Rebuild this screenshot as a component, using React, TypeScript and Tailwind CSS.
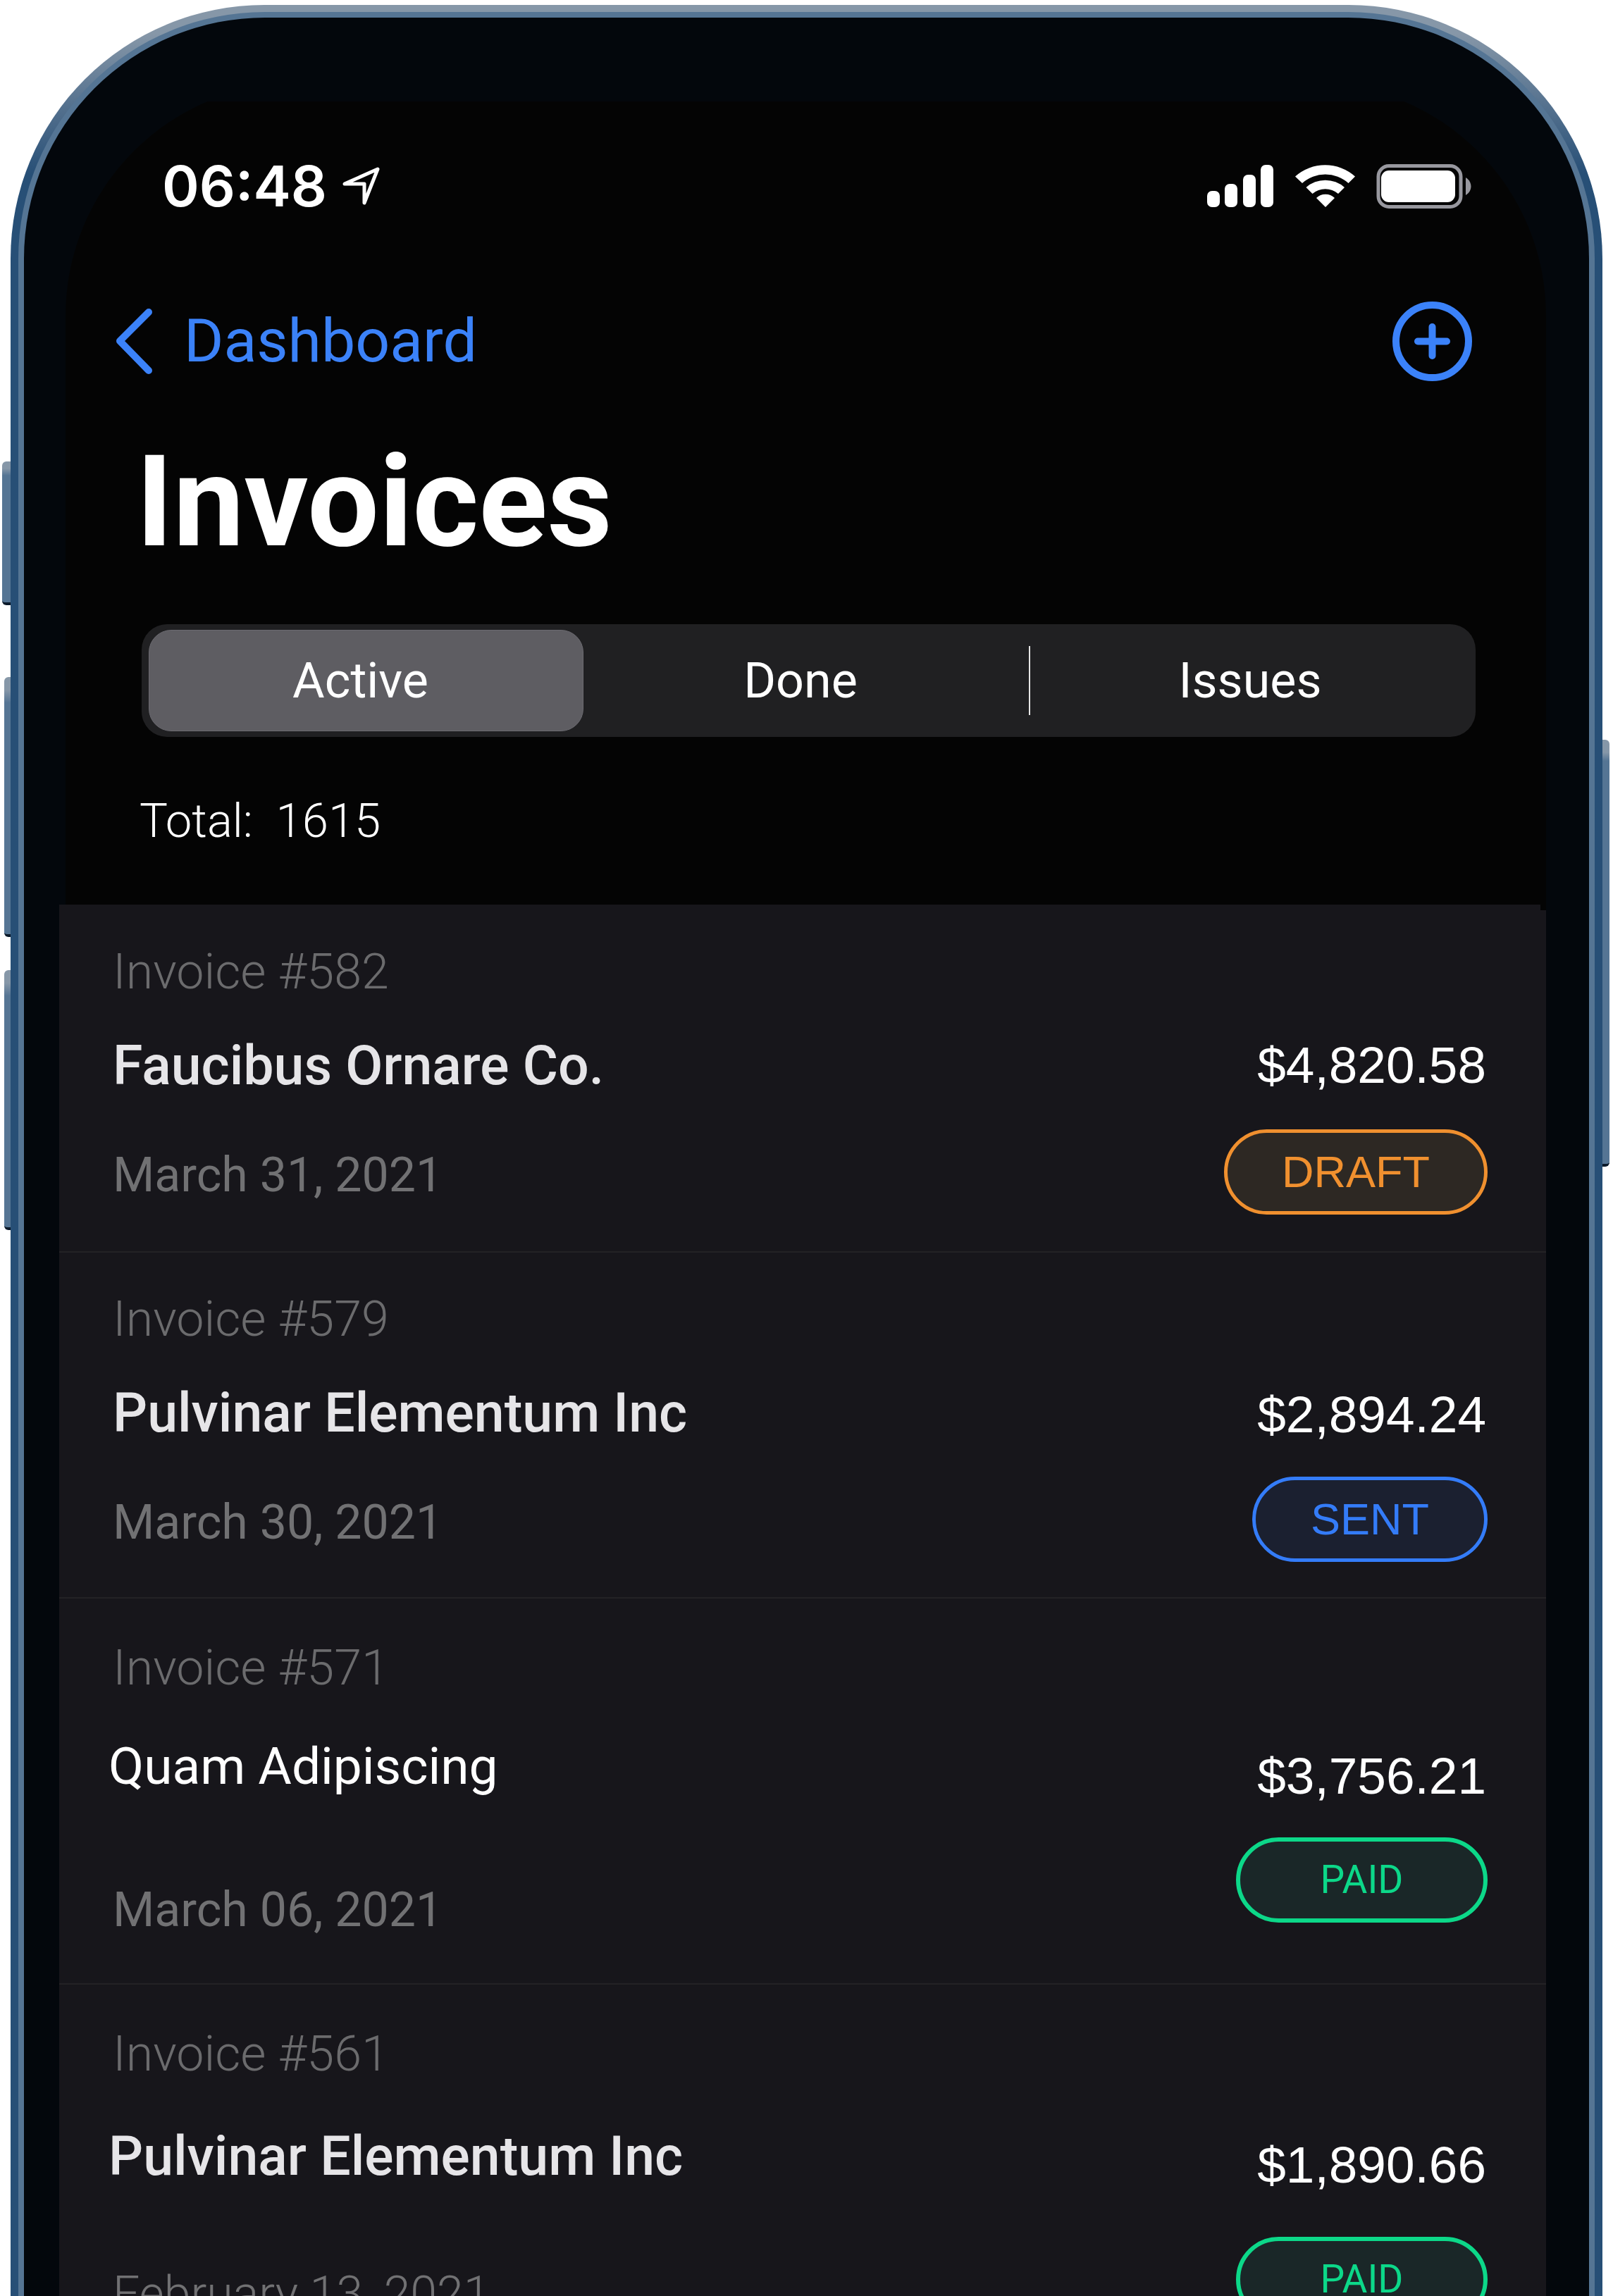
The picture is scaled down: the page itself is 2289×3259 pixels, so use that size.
import React from "react";

type Status = "DRAFT" | "SENT" | "PAID";

const invoices: {
  id: number; name: string; date: string; amount: string; status: Status;
  nameClass: string; dateClass: string; left: string; right: string; row: string;
}[] = [
  { id: 582, name: "Faucibus Ornare Co.", date: "March 31, 2021", amount: "$4,820.58", status: "DRAFT", nameClass: "mt-12 text-[77px] font-medium text-[#e6e5e8]", dateClass: "mt-[70px] font-normal", left: "pt-[53px]", right: "pt-[186px] gap-[49px]", row: "h-[494px]" },
  { id: 579, name: "Pulvinar Elementum Inc", date: "March 30, 2021", amount: "$2,894.24", status: "SENT", nameClass: "mt-12 text-[77px] font-medium text-[#e6e5e8]", dateClass: "mt-[70px] font-normal", left: "pt-[52px]", right: "pt-[188px] gap-[46px]", row: "h-[491px]" },
  { id: 571, name: "Quam Adipiscing", date: "March 06, 2021", amount: "$3,756.21", status: "PAID", nameClass: "mt-[54px] -ml-1.5 text-[73px] font-normal text-white", dateClass: "mt-[119px] font-normal", left: "pt-[56px]", right: "pt-[210px] gap-[45px]", row: "h-[548px]" },
  { id: 561, name: "Pulvinar Elementum Inc", date: "February 13, 2021", amount: "$1,890.66", status: "PAID", nameClass: "mt-[60px] -ml-1.5 text-[77px] font-medium text-[#e6e5e8]", dateClass: "mt-[110px] font-light", left: "pt-[56px]", right: "pt-[214px] gap-[60px]", row: "h-[547px]" },
];

const pill: Record<Status, string> = {
  DRAFT: "w-[374px] border-5 border-[#f0902f] bg-[#2d2823] text-[#f0902f] text-[63px] font-['Liberation_Sans',sans-serif]",
  SENT: "w-[334px] border-5 border-[#347cf8] bg-[#1b2030] text-[#347cf8] text-[63px] font-['Liberation_Sans',sans-serif]",
  PAID: "w-[357px] border-6 border-[#0cd889] bg-[#1a2728] text-[#0cd889] text-[55px] font-[Roboto,sans-serif]",
};

function StatusIcons() {
  return (
    <svg viewBox="1710 228 382 70" className="h-[70px] w-[382px]" aria-label="Signal, Wi-Fi and battery" role="img">
      <g fill="#fff">
        <rect x="1714" y="270" width="18" height="23" rx="7" />
        <rect x="1739" y="260" width="18" height="33" rx="7" />
        <rect x="1765" y="247" width="18" height="46" rx="7" />
        <rect x="1790" y="233" width="18" height="60" rx="7" />
        <path d="M1839 249.500A64 64 0 0 1 1924 249.500L1914.500 259A49 49 0 0 0 1849 259Z" />
        <path d="M1854.500 265A41 41 0 0 1 1909 265L1900 274A28 28 0 0 0 1863.500 274Z" />
        <path d="M1869 280A19 19 0 0 1 1895 280L1882 293Z" />
        <rect x="1961" y="241" width="105" height="45" rx="11" />
      </g>
      <rect x="1957" y="234.500" width="117" height="58" rx="15" fill="none" stroke="#98989f" strokeWidth="5" />
      <path d="M2081 251C2091 257 2091 270 2081 276Z" fill="#98989f" />
    </svg>
  );
}

export default function App() {
  return (
    <div className="h-screen overflow-hidden bg-white font-[Roboto,sans-serif]">
      <div className="relative mx-[15px] pt-[7px]">
        <i className="absolute top-[655px] -left-3 h-[204px] w-3 rounded-l-md border-b-4 border-[#0b1a2a] bg-linear-to-b from-[#8697a8] from-5% via-[#557594] via-10% to-[#557594]" />
        <i className="absolute top-[961px] -left-[9px] h-[369px] w-[9px] rounded-l-md border-b-4 border-[#0b1a2a] bg-linear-to-b from-[#8697a8] from-5% via-[#557594] via-10% to-[#557594]" />
        <i className="absolute top-[1377px] -left-[9px] h-[369px] w-[9px] rounded-l-md border-b-4 border-[#0b1a2a] bg-linear-to-b from-[#8697a8] from-5% via-[#557594] via-10% to-[#557594]" />
        <i className="absolute top-[1050px] -right-[10px] h-[606px] w-[10px] rounded-r-md border-b-4 border-[#0b1a2a] bg-linear-to-b from-[#8697a8] from-3% via-[#557594] via-5% to-[#557594]" />
        <div className="rounded-t-[360px] bg-linear-to-b from-[#8697a8] from-[40px] to-[#274f76] to-[240px] px-[11px] pt-[10px]">
          <div className="rounded-t-[350px] bg-[#557594] px-2 pt-2">
            <div className="min-h-screen rounded-t-[342px] bg-[#03070c] pr-[61px] pl-[50px] pt-[93px]">
              <main>
                <div className="ml-[9px] h-[1166px] rounded-t-[330px] bg-linear-to-b from-[#03070c] from-[26px] to-[#040404] to-[26px]">
                  <div className="flex items-center justify-between pr-[103px] pl-[137px] pt-[111px]">
                    <div className="flex items-center gap-[22px] text-white">
                      <time className="text-[80px] leading-[70px] font-semibold font-[Inter,sans-serif]">06:48</time>
                      <svg viewBox="0 0 54 54" className="size-[54px]" fill="none" stroke="#fff" strokeWidth="5" strokeLinejoin="round" aria-hidden="true"><path d="M3 24 50 3 31 51V24Z" /></svg>
                    </div>
                    <StatusIcons />
                  </div>
                  <nav className="mt-[127px] flex h-[116px] items-center justify-between pr-[105px] pl-[71px]">
                    <a href="#dashboard" className="flex items-center gap-[45px] text-[86px] leading-[100px] text-[#3b82f9]">
                      <svg viewBox="0 0 52 93" className="h-[93px] w-[52px]" fill="none" stroke="currentColor" strokeWidth="10" strokeLinecap="round" strokeLinejoin="round" aria-hidden="true"><path d="M47 5 6 46 47 88" /></svg>
                      Dashboard
                    </a>
                    <button aria-label="Add invoice" className="text-[#3b82f9]">
                      <svg viewBox="0 0 113 113" className="size-[113px]" fill="none" stroke="currentColor" strokeWidth="10" strokeLinecap="round"><circle cx="56.500" cy="56.500" r="51.500" /><path d="M56.500 36v41M36 56.500h41" /></svg>
                    </button>
                  </nav>
                  <div className="pr-[100px] pl-[108px]">
                    <h1 className="mt-[65px] -ml-2 text-[180px] leading-[212px] font-bold text-white">Invoices</h1>
                    <div role="tablist" className="mt-[67px] flex h-[160px] items-center rounded-[36px] bg-[#202022] p-2 pl-[10px] text-[70px] leading-[82px] text-white">
                      <button role="tab" aria-selected="true" className="h-[144px] w-[617px] rounded-[32px] border border-[#6b6a70] bg-[#5e5d62] pr-4">Active</button>
                      <button role="tab" aria-selected="false" className="h-[98px] w-[634px] border-r-2 border-[#e5e5e5] pr-4">Done</button>
                      <button role="tab" aria-selected="false" className="h-[98px] flex-1">Issues</button>
                    </div>
                    <p className="mt-[78px] -ml-[3px] text-[67px] leading-[82px] font-light whitespace-pre text-white">Total:  1615</p>
                  </div>
                </div>
                <ul className="relative bg-[#17161b]">
                  <i className="absolute top-0 right-0 size-2 bg-[#040404]" />
                  {invoices.map((v) => (
                    <li key={v.id} className={`flex justify-between border-b-2 border-[#232225] pr-[83px] pl-[76px] ${v.row}`}>
                      <div className={v.left}>
                        <p className="text-[70px] leading-[84px] font-light text-[#6b6b6d]">Invoice #{v.id}</p>
                        <h2 className={`leading-[88px] ${v.nameClass}`}>{v.name}</h2>
                        <p className={`text-[68px] leading-[82px] text-[#717173] ${v.dateClass}`}>{v.date}</p>
                      </div>
                      <div className={`flex flex-col items-end ${v.right}`}>
                        <p className="pr-0.5 text-[73px] leading-[84px] text-white font-['Liberation_Sans',sans-serif]">{v.amount}</p>
                        <span className={`flex h-[121px] shrink-0 items-center justify-center rounded-full ${pill[v.status]}`}>{v.status}</span>
                      </div>
                    </li>
                  ))}
                </ul>
              </main>
            </div>
          </div>
        </div>
      </div>
    </div>
  );
}
